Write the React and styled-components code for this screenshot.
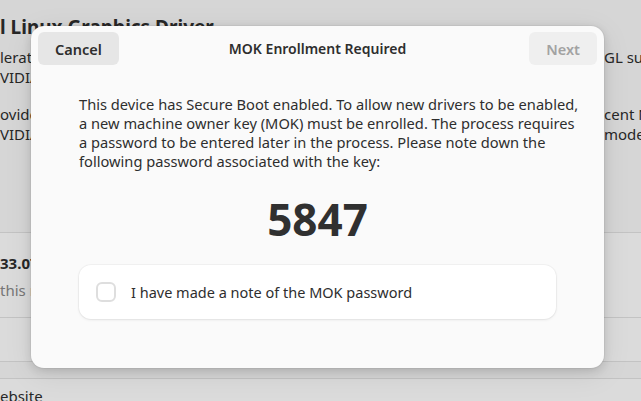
import React from 'react';
import styled, { createGlobalStyle } from 'styled-components';

const Global = createGlobalStyle`
  html, body { margin: 0; padding: 0; }
  body {
    width: 641px; height: 401px; overflow: hidden;
    font-family: "Noto Sans", "Open Sans", sans-serif;
  }
`;

const Page = styled.div`
  position: relative;
  width: 641px;
  height: 401px;
  overflow: hidden;
  background: #fafafa;
  color: #2e2e2e;
  font-size: 15px;
`;

const Content = styled.div`
  display: flex;
  flex-direction: column;
  padding-top: 13px;
  white-space: nowrap;
`;

const AppTitle = styled.div`
  font-size: 19px;
  font-weight: 700;
  line-height: 28px;
`;

const Paragraph = styled.div`
  display: flex;
  flex-direction: column;
  margin-top: ${p => p.$gap}px;
`;

const DescLine = styled.div`
  display: grid;
  grid-template-columns: 1fr 37px;
  line-height: 19.5px;
`;

const Fragment = styled.span`
  overflow: hidden;
`;

const Card = styled.div`
  margin: ${p => p.$top}px -20px 0;
  padding: 0 20px;
  background: #ffffff;
  border-top: 1px solid #e4e4e4;
  border-bottom: 1px solid #e4e4e4;
  display: flex;
  flex-direction: column;
`;

const Row = styled.div`
  display: flex;
  flex-direction: column;
  gap: ${p => p.$gap || 0}px;
  height: ${p => p.$h}px;
  box-sizing: border-box;
  padding-top: ${p => p.$pt || 0}px;
  border-top: ${p => (p.$sep ? '1px solid #e4e4e4' : 'none')};
  line-height: 20px;
`;

const Strong = styled.span`
  font-weight: 700;
`;

const Dim = styled.span`
  color: #8a8a8a;
`;

const Overlay = styled.div`
  position: absolute;
  inset: 0;
  background: rgba(0, 0, 0, 0.14);
  display: flex;
  align-items: flex-start;
  padding: 26px 0 0 31px;
`;

const Dialog = styled.div`
  width: 573px;
  height: 342px;
  box-sizing: border-box;
  background: #fafafa;
  border-radius: 13px;
  box-shadow: 0 0 0 1px rgba(0, 0, 0, 0.04), 0 3px 10px rgba(0, 0, 0, 0.14), 0 6px 30px rgba(0, 0, 0, 0.08);
  display: flex;
  flex-direction: column;
  color: #2e2e2e;
`;

const Header = styled.div`
  display: grid;
  grid-template-columns: 1fr auto 1fr;
  align-items: center;
  padding: 6px 7px 0 7px;
`;

const HeaderButton = styled.button`
  justify-self: ${p => p.$side};
  height: 33px;
  padding: 0 ${p => p.$px}px;
  border: none;
  border-radius: 6px;
  background: ${p => (p.disabled ? '#efefef' : '#e6e6e6')};
  color: ${p => (p.disabled ? '#a2a2a2' : '#2e2e2e')};
  font-family: "Noto Sans", sans-serif;
  font-size: 14.5px;
  font-weight: 600;
`;

const Title = styled.div`
  font-size: 14px;
  font-weight: 600;
`;

const Body = styled.div`
  display: flex;
  flex-direction: column;
  padding: 30px 48px 0;
`;

const Text = styled.p`
  margin: 0;
  font-size: 14.66px;
  line-height: 19px;
  white-space: nowrap;
`;

const Code = styled.div`
  margin-top: 22px;
  text-align: center;
  font-size: 44px;
  line-height: 52px;
  font-weight: 700;
  color: #303030;
`;

const CheckCard = styled.label`
  margin-top: 20px;
  height: 54px;
  box-sizing: border-box;
  display: flex;
  align-items: center;
  gap: 15px;
  padding: 0 17px;
  background: #ffffff;
  border-radius: 12px;
  box-shadow: 0 0 0 1px rgba(0, 0, 0, 0.03), 0 1px 3px rgba(0, 0, 0, 0.08);
  font-size: 14.5px;
`;

const Box = styled.span`
  width: 20px;
  height: 20px;
  box-sizing: border-box;
  border: 2px solid #dedede;
  border-radius: 6px;
  background: #ffffff;
  flex-shrink: 0;
`;

export default function App() {
  return (
    <>
      <Global />
      <Page>
        <Content>
          <AppTitle>l Linux Graphics Driver</AppTitle>
          <Paragraph $gap={7}>
            <DescLine><Fragment>lerated graphics for NVIDIA cards with Open</Fragment><span>GL support</span></DescLine>
            <DescLine><Fragment>VIDIA</Fragment><span></span></DescLine>
          </Paragraph>
          <Paragraph $gap={18}>
            <DescLine><Fragment>ovide the best performance on re</Fragment><span>cent NVIDIA</span></DescLine>
            <DescLine><Fragment>VIDIA hardware for gaming and</Fragment><span>modern</span></DescLine>
          </Paragraph>
          <Card $top={88}>
            <Row $h={84} $pt={20} $gap={7}>
              <Strong>33.07</Strong>
              <Dim>this release</Dim>
            </Row>
            <Row $h={44} $sep />
          </Card>
          <Card $top={16}>
            <Row $h={40} $pt={7}>
              <span>ebsite</span>
            </Row>
          </Card>
        </Content>
        <Overlay>
          <Dialog>
            <Header>
              <HeaderButton $side="start" $px={17}>Cancel</HeaderButton>
              <Title>MOK Enrollment Required</Title>
              <HeaderButton $side="end" $px={17} disabled>Next</HeaderButton>
            </Header>
            <Body>
              <Text>
                This device has Secure Boot enabled. To allow new drivers to be enabled,<br />
                a new machine owner key (MOK) must be enrolled. The process requires<br />
                a password to be entered later in the process. Please note down the<br />
                following password associated with the key:
              </Text>
              <Code>5847</Code>
              <CheckCard>
                <Box />
                <span>I have made a note of the MOK password</span>
              </CheckCard>
            </Body>
          </Dialog>
        </Overlay>
      </Page>
    </>
  );
}
